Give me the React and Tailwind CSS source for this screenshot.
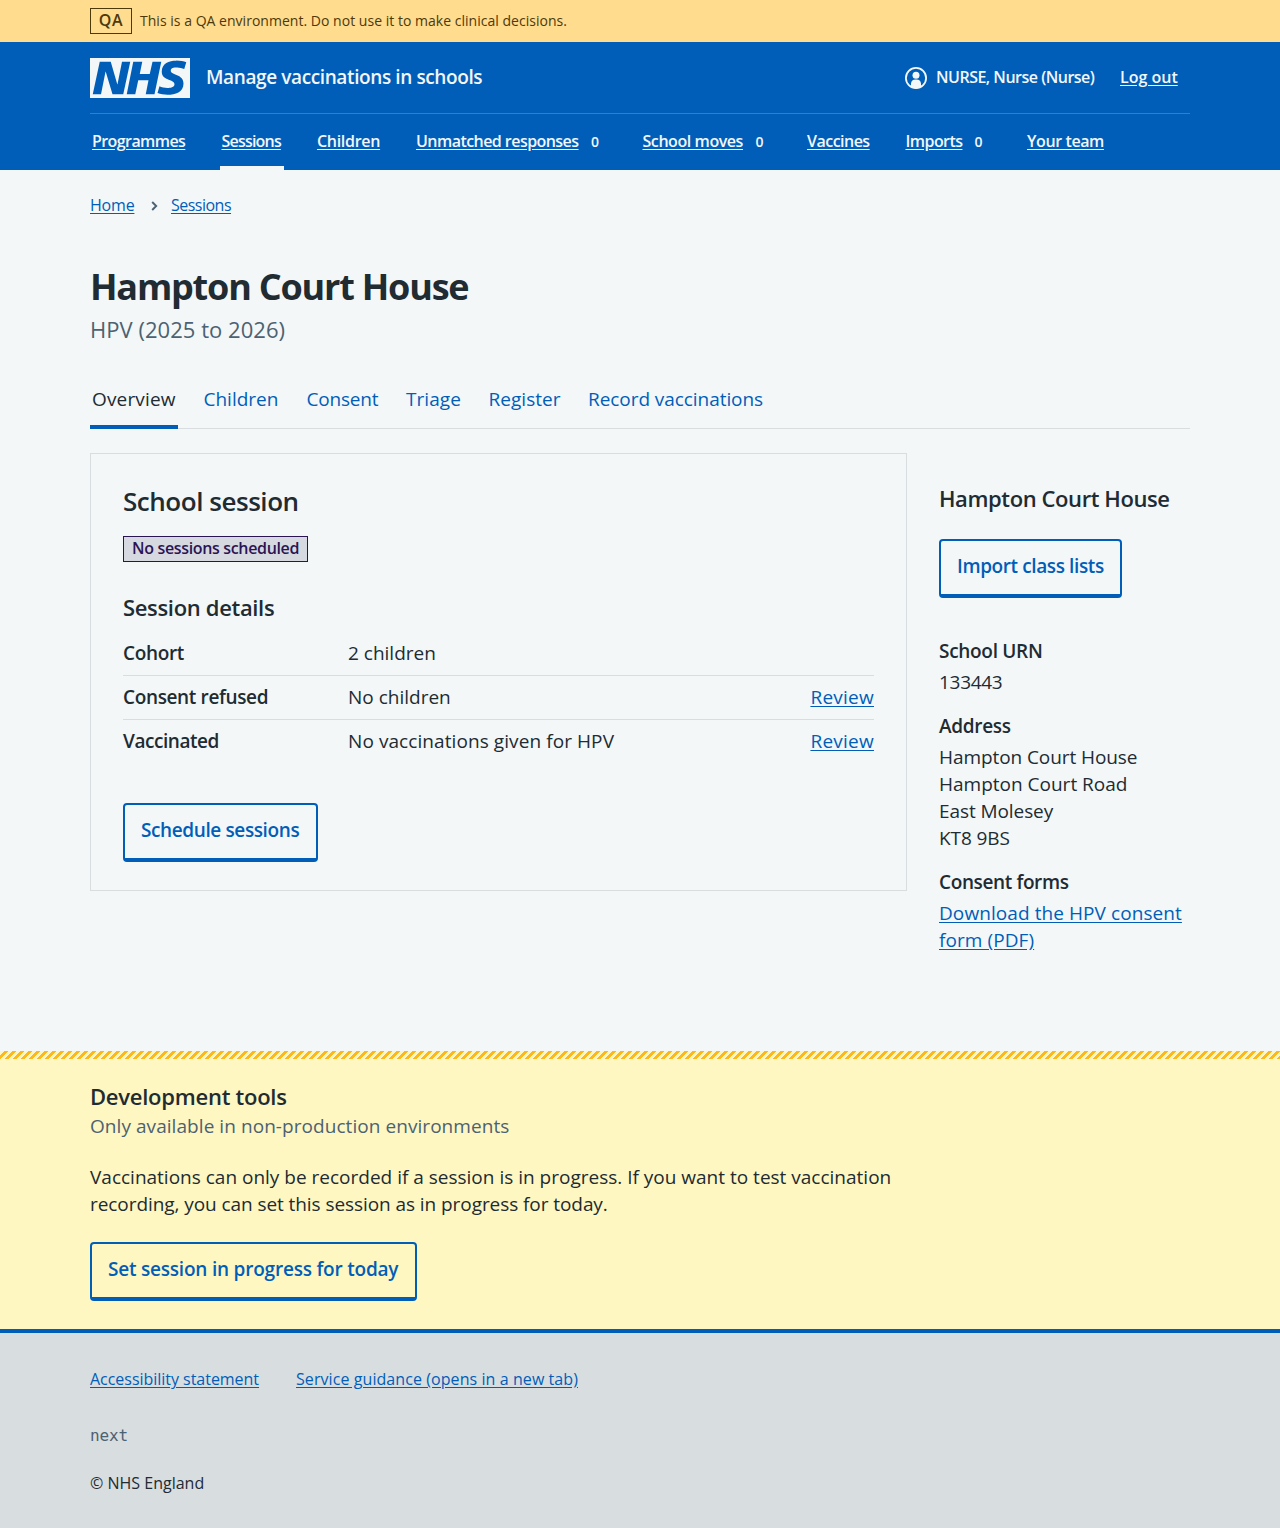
import React from "react";

function NhsLogo() {
  return (
    <svg className="h-10 w-[100px] shrink-0" viewBox="0 0 200 80" role="img" aria-label="NHS">
      <path
        fill="#f3f7f8"
        d="M200 0v80H0V0h200Zm-27.5 5.5c-14.5 0-29 5-29 22 0 10.2 7.7 13.5 14.7 16.3l.7.3c5.4 2 10.1 3.9 10.1 8.4 0 6.5-8.5 7.5-14 7.5s-12.5-1.5-16-3.5L135 70c5.5 2 13.5 3.5 20 3.5 15.5 0 32-4.5 32-22.500 0-19.500-25.500-16.500-25.500-25.500 0-5.500 5.500-6.500 12.500-6.500a35 35 0 0 1 14.500 3l4-13.500c-4.500-2-12-3.500-20-3.500Zm-131 2h-22l-14 65H22l9-45h.5l13.500 45h21.500l14-65H64l-9 45h-.5l-13-45Zm63 0h-18l-13 65h17l6-28H117l-5.500 28H129l13.500-65H125L119.500 32h-20l5-24.500Z"
      />
    </svg>
  );
}

function UserIcon() {
  return (
    <svg className="h-[22px] w-[22px] shrink-0" viewBox="0 0 22 22" aria-hidden="true">
      <circle cx="11" cy="11" r="10.100" fill="none" stroke="#f3f7f8" strokeWidth="1.800" />
      <circle cx="11" cy="8.300" r="3.500" fill="#f3f7f8" />
      <path fill="#f3f7f8" d="M6 20v-3.500a4.500 4.500 0 0 1 4.500-4h1a4.500 4.500 0 0 1 4.500 4V20a10 10 0 0 1-10 0Z" />
    </svg>
  );
}

const navItems = [
  { label: "Programmes", cls: "w-[94px] tracking-[-0.58px]", box: "w-[129.500px]" },
  { label: "Sessions", cls: "w-[60px] tracking-[-0.8px]", box: "w-[95.500px]", active: true },
  { label: "Children", cls: "w-[63px] tracking-[-0.3px]", box: "w-[99px]" },
  { label: "Unmatched responses", cls: "w-[163px] tracking-[-0.55px]", box: "w-[226.500px]", count: 0 },
  { label: "School moves", cls: "w-[101px] tracking-[-0.43px]", box: "w-[164.500px]", count: 0 },
  { label: "Vaccines", cls: "w-[63px] tracking-[-0.52px]", box: "w-[98.500px]" },
  { label: "Imports", cls: "w-[57px] tracking-[-0.57px]", box: "w-[121.500px]", count: 0 },
  { label: "Your team", cls: "w-[77px] tracking-[-0.4px]", box: "w-[80px]" },
];

const tabs = [
  { label: "Overview", cls: "w-[87.500px] tracking-[0.15px]", active: true },
  { label: "Children", cls: "w-[79px]" },
  { label: "Consent", cls: "w-[75.500px] tracking-[-0.2px]" },
  { label: "Triage", cls: "w-[58.500px] tracking-[0.05px]" },
  { label: "Register", cls: "w-[75.500px] tracking-[0.03px]" },
  { label: "Record vaccinations", cls: "w-[179px] tracking-[-0.06px]" },
];

function Button({ children, className }) {
  return (
    <button
      type="button"
      className={`block h-[59px] whitespace-nowrap rounded-[4px] border-2 border-b-4 border-[#005eb8] pl-4 pb-[2px] text-left text-[19px] font-semibold leading-[27px] text-[#005eb8] ${className}`}
    >
      {children}
    </button>
  );
}

function Row({ label, labelClass, value, action, last }) {
  return (
    <div className={`flex h-11 items-center border-b ${last ? "border-transparent" : "border-[#d8dde0]"}`}>
      <dt className={`w-[225px] font-semibold ${labelClass}`}>{label}</dt>
      <dd className="flex-1">{value}</dd>
      {action && (
        <dd>
          <a href="#" className="tracking-[0.25px] text-[#005eb8] underline underline-offset-2">
            {action}
          </a>
        </dd>
      )}
    </div>
  );
}

export default function App() {
  return (
    <div className="h-[1528px] w-[1280px] bg-[#f3f7f8] font-['Open_Sans','Noto_Sans',sans-serif] text-[19px] leading-[27px] text-[#212b32]">
      <div className="flex h-[42px] items-center bg-[#ffdc8e] pl-[90px] text-[#4d3a0b]">
        <strong className="flex h-[26px] w-[42px] items-center justify-center border border-[#4d3a0b] pb-[2px] text-base font-semibold tracking-[0.7px]">
          QA
        </strong>
        <span className="ml-2 text-sm tracking-[0.024px]">
          This is a QA environment. Do not use it to make clinical decisions.
        </span>
      </div>

      <header className="h-32 bg-[#005eb8] px-[90px] text-[#f3f7f8]">
        <div className="flex h-[72px] items-center border-b border-[#337ec6]">
          <NhsLogo />
          <span className="ml-4 font-semibold tracking-[-0.39px]">Manage vaccinations in schools</span>
          <div className="mr-3 ml-auto flex items-center text-base font-semibold">
            <UserIcon />
            <span className="ml-[9px] w-[184px] pb-px whitespace-nowrap tracking-[-0.5px]">NURSE, Nurse (Nurse)</span>
            <a href="#" className="w-[58px] pb-px whitespace-nowrap underline underline-offset-2">
              Log out
            </a>
          </div>
        </div>
        <nav className="flex h-14 text-base font-semibold">
          {navItems.map((item) => (
            <div key={item.label} className={`flex shrink-0 whitespace-nowrap ${item.box}`}>
              <div className={`flex h-14 items-center border-b-4 px-[2px] pt-[2px] ${item.active ? "border-[#f3f7f8]" : "border-transparent"}`}>
                <a href="#" className={`underline underline-offset-2 ${item.cls}`}>
                  {item.label}
                </a>
                {item.count !== undefined && <span className="ml-3 text-[14px]">{item.count}</span>}
              </div>
            </div>
          ))}
        </nav>
      </header>

      <main className="h-[881px] px-[90px]">
        <nav className="flex h-[72px] items-center text-base text-[#005eb8]">
          <a href="#" className="w-[44px] pb-[2px] tracking-[-0.2px] underline underline-offset-2">Home</a>
          <svg className="mr-[13px] ml-4 h-[10px] w-2" viewBox="0 0 8 10" aria-hidden="true">
            <path d="M2.200 1 6.200 5l-4 4" fill="none" stroke="#4c6272" strokeWidth="1.900" />
          </svg>
          <a href="#" className="pb-[2px] tracking-[-0.51px] underline underline-offset-2">Sessions</a>
        </nav>

        <h1 className="mt-6 text-[36px] leading-[42px] font-bold tracking-[-1.2px]">Hampton Court House</h1>
        <p className="mt-[3px] h-[37px] text-[22px] leading-[36px] tracking-[0.04px] text-[#4c6272]">HPV (2025 to 2026)</p>

        <nav className="mt-6 flex h-[57px] gap-6 border-b border-[#d8dde0] text-[#005eb8]">
          {tabs.map((tab) => (
            <a
              key={tab.label}
              href="#"
              className={`h-[57px] border-b-4 px-[2px] pt-[14px] whitespace-nowrap ${tab.cls} ${tab.active ? "border-[#005eb8] text-[#212b32]" : "border-transparent"}`}
            >
              {tab.label}
            </a>
          ))}
        </nav>

        <div className="mt-6 flex items-start gap-8">
          <section className="h-[438px] w-[817px] border border-[#d8dde0] px-8 pt-[29px]">
            <h2 className="text-[26px] leading-9 font-semibold tracking-[-0.46px]">School session</h2>
            <strong className="mt-[17px] flex h-[26px] w-[185px] items-center border border-[#2b1453] bg-[#d6dae0] pb-[2px] pl-2 text-base font-semibold tracking-[-0.34px] whitespace-nowrap text-[#2b1453]">
              No sessions scheduled
            </strong>
            <h3 className="mt-[31px] h-[39px] text-[22px] leading-[29px] font-semibold tracking-[-0.33px]">Session details</h3>
            <dl>
              <Row label="Cohort" labelClass="tracking-[-0.34px]" value="2 children" />
              <Row label="Consent refused" labelClass="tracking-[-0.36px]" value="No children" action="Review" />
              <Row
                label="Vaccinated"
                labelClass="tracking-[-0.44px]"
                value={<span className="tracking-[0.08px]">No vaccinations given for HPV</span>}
                action="Review"
                last
              />
            </dl>
            <Button className="mt-[39px] w-[194.500px] tracking-[-0.39px]">Schedule sessions</Button>
          </section>

          <aside className="w-[251px] pt-[31px]">
            <h2 className="text-[22px] leading-[29px] font-semibold tracking-[-0.41px] whitespace-nowrap">Hampton Court House</h2>
            <Button className="mt-[26px] w-[182.500px] tracking-[-0.39px]">Import class lists</Button>
            <dl className="mt-10">
              <dt className="font-semibold tracking-[-0.3px]">School URN</dt>
              <dd className="mt-1 mb-[17px] tracking-[-0.3px]">133443</dd>
              <dt className="font-semibold tracking-[-0.3px]">Address</dt>
              <dd className="mt-1 mb-[17px]">
                <span className="tracking-[-0.08px]">Hampton Court House</span>
                <br />
                Hampton Court Road
                <br />
                <span className="tracking-[-0.08px]">East Molesey</span>
                <br />
                <span className="tracking-[-0.1px]">KT8 9BS</span>
              </dd>
              <dt className="font-semibold tracking-[-0.38px]">Consent forms</dt>
              <dd className="mt-1">
                <a href="#" className="tracking-[0.08px] text-[#005eb8] underline underline-offset-2">
                  Download the HPV consent
                  <br />
                  form (PDF)
                </a>
              </dd>
            </dl>
          </aside>
        </div>
      </main>

      <section className="h-[278px] bg-[#fff7c2]">
        <div className="h-2 bg-[linear-gradient(-45deg,#ffb81c_25%,transparent_25%,transparent_50%,#ffb81c_50%,#ffb81c_75%,transparent_75%)] bg-[length:8px_8px]" />
        <div className="px-[90px] pt-[23px]">
          <h2 className="text-[22px] leading-[29px] font-semibold tracking-[-0.25px]">Development tools</h2>
          <p className="mt-[2px] tracking-[0.06px] text-[#4c6272]">Only available in non-production environments</p>
          <p className="mt-6">
            Vaccinations can only be recorded if a session is in progress. If you want to test vaccination
            <br />
            <span className="tracking-[-0.07px]">recording, you can set this session as in progress for today.</span>
          </p>
          <Button className="mt-6 w-[326.500px] tracking-[-0.21px]">Set session in progress for today</Button>
        </div>
      </section>

      <footer className="h-[199px] border-t-4 border-[#005eb8] bg-[#d8dde0] px-[90px] pt-[34px] text-base leading-6">
        <div className="flex gap-[37px] text-[#005eb8]">
          <a href="#" className="w-[169px] tracking-[-0.03px] whitespace-nowrap underline underline-offset-2">Accessibility statement</a>
          <a href="#" className="tracking-[0.076px] underline underline-offset-2">Service guidance (opens in a new tab)</a>
        </div>
        <p className="mt-[33px] font-['DejaVu_Sans_Mono',monospace] tracking-[-0.1px] text-[#4c6272]">next</p>
        <p className="mt-[23px]">© NHS England</p>
      </footer>
    </div>
  );
}
